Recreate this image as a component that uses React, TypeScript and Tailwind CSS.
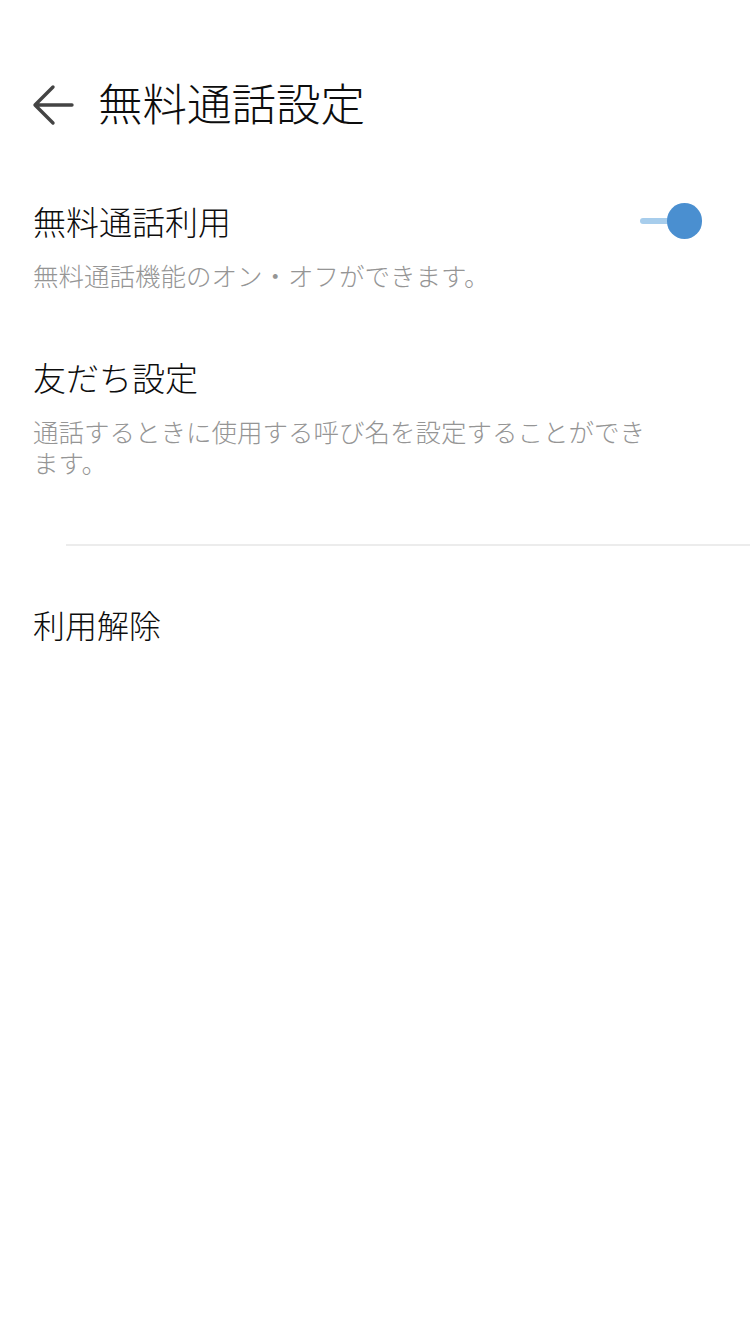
import React, { useState } from 'react';

const ArrowLeft: React.FC = () => (
  <svg width="42" height="42" viewBox="0 0 42 42" fill="none">
    <path d="M40 21H4M21 3L3 21l18 18" stroke="#444" strokeWidth="3.4" strokeLinecap="round" strokeLinejoin="round" />
  </svg>
);

const Toggle: React.FC<{ on: boolean; onChange: () => void }> = ({ on, onChange }) => (
  <button className="relative w-[62px] h-[36px] shrink-0" onClick={onChange}>
    <span className={`absolute left-0 right-[10px] top-[15px] h-[6px] rounded-full ${on ? 'bg-[#a7cdec]' : 'bg-[#d0d0d0]'}`} />
    <span
      className={`absolute top-0 w-[35px] h-[36px] rounded-full ${on ? 'right-0 bg-[#4a8fd0]' : 'left-0 bg-[#f2f2f2] shadow'}`}
    />
  </button>
);

export default function App() {
  const [enabled, setEnabled] = useState(true);

  return (
    <div
      className="w-[750px] min-h-[1334px] bg-white text-[#0d0d0d] font-light"
      style={{ fontFamily: '"Noto Sans CJK JP", "Noto Sans", sans-serif' }}
    >
      <div className="pt-[58px] h-[146px] flex items-center pl-[32px]">
        <div className="mt-[6px]">
          <ArrowLeft />
        </div>
        <h1 className="ml-[24px] text-[44.5px] leading-[88px] font-light">無料通話設定</h1>
      </div>

      <div className="pl-[33px] pr-[48px] pt-[55px]">
        <div className="flex items-center justify-between">
          <div className="text-[33px] leading-[40px]">無料通話利用</div>
          <Toggle on={enabled} onChange={() => setEnabled(!enabled)} />
        </div>
        <p className="mt-[18px] text-[25.5px] leading-[31px] text-[#959595]">
          無料通話機能のオン・オフができます。
        </p>
      </div>

      <div className="pl-[33px] pt-[67px]">
        <div className="text-[33px] leading-[40px]">友だち設定</div>
        <p className="mt-[18px] w-[636px] text-[25.5px] leading-[31px] text-[#959595]">
          通話するときに使用する呼び名を設定することができます。
        </p>
      </div>

      <div className="mt-[67px] ml-[66px] h-[2px] bg-[#ececec]" />

      <div className="pl-[33px] pt-[58px]">
        <div className="text-[32px] leading-[40px]">利用解除</div>
      </div>
    </div>
  );
}
